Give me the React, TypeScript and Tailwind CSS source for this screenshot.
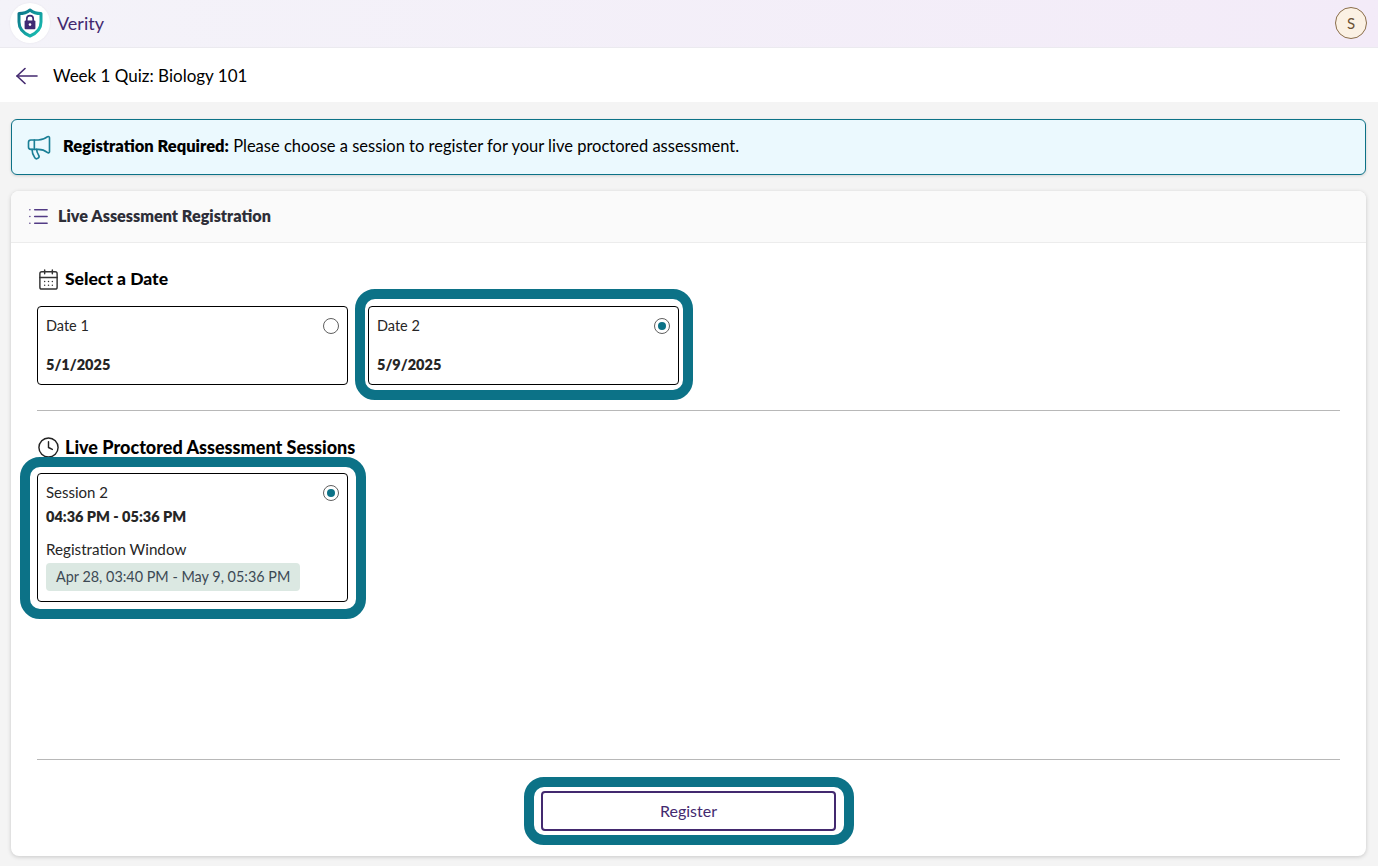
import { CalendarDays, Clock, List, Megaphone } from 'lucide-react'

// teal highlight drawn around the selected items, the gaps are not even in the picture
const ringBase = 'pointer-events-none absolute rounded-[20px] border-[10px] border-[#0c7287]'

function ShieldLogo() {
  return (
    <svg width="26" height="30" viewBox="0 0 26 30" fill="none">
      <defs>
        <linearGradient id="shield" x1="0" y1="0" x2="1" y2="1">
          <stop offset="0" stopColor="#0c7287" />
          <stop offset="1" stopColor="#19c3b5" />
        </linearGradient>
      </defs>
      <path
        d="M13 2 C16 4.5 20 5.6 24 5.6 V14 C24 21 19 25.5 13 28 C7 25.5 2 21 2 14 V5.6 C6 5.6 10 4.5 13 2 Z"
        stroke="url(#shield)"
        strokeWidth="3"
        strokeLinejoin="round"
      />
      <path d="M9.8 13 V10.8 A3.2 3.2 0 0 1 16.2 10.8 V13" stroke="#3f2a73" strokeWidth="1.7" />
      <rect x="7.6" y="12.6" width="10.8" height="8.6" rx="1" fill="#3f2a73" />
      <circle cx="13" cy="16.6" r="1.3" fill="#ffffff" />
    </svg>
  )
}

function BackArrow() {
  return (
    <svg width="22" height="18" viewBox="0 0 22 18" fill="none" stroke="#43296f" strokeWidth="1.6" strokeLinecap="round" strokeLinejoin="round">
      <path d="M1 9 H21" />
      <path d="M9 1.5 L1 9 L9 16.5" />
    </svg>
  )
}

function Radio({ checked }: { checked?: boolean }) {
  return (
    <span className="flex size-4 shrink-0 items-center justify-center rounded-full border border-[#5f5f5f] bg-white">
      {checked && <span className="size-2 rounded-full bg-[#0c7287]" />}
    </span>
  )
}

function DateCard({ label, date, checked }: { label: string; date: string; checked?: boolean }) {
  return (
    <div className="relative flex h-[79px] w-[311px] flex-col justify-between rounded-[4px] border border-black bg-white px-2 py-[10px]">
      <div className="flex items-center justify-between text-[14.5px] leading-[18px] text-[#262626]">
        <span>{label}</span>
        <Radio checked={checked} />
      </div>
      <div className="text-[14.5px] leading-[18px] font-extrabold text-[#262626]">{date}</div>
      {checked && <div className={`${ringBase} -top-[18px] -right-[15px] -bottom-[16px] -left-[14px]`} />}
    </div>
  )
}

function SectionTitle({ icon, size, children }: { icon: React.ReactNode; size: string; children: React.ReactNode }) {
  return (
    <h2 className={`flex h-5 items-center gap-[5px] font-black text-black ${size}`}>
      {icon}
      {children}
    </h2>
  )
}

export default function App() {
  return (
    <div className="flex h-[866px] flex-col overflow-hidden bg-[#f4f4f4] font-['Lato',sans-serif]">
      <header className="flex h-[48px] shrink-0 items-center justify-between border-b border-[#ebeaef] bg-gradient-to-r from-[#f4f3f9] to-[#f3ebf8] pr-[11px] pb-[1px] pl-[10px]">
        <div className="flex items-center gap-[7px]">
          <div className="flex size-10 items-center justify-center rounded-full bg-white shadow-[0_0_2px_#e4e2ea]">
            <ShieldLogo />
          </div>
          <span className="text-[18px] text-[#43296f]">Verity</span>
        </div>
        <div className="flex size-[32px] items-center justify-center rounded-full border border-[#8a6d4a] bg-[#fbf1e4] text-[15px] text-[#6b5134]">
          S
        </div>
      </header>

      <div className="flex h-[54px] shrink-0 items-center gap-[15px] bg-white pt-[2px] pl-[16px]">
        <BackArrow />
        <h1 className="text-[17px] text-black">Week 1 Quiz: Biology 101</h1>
      </div>

      <main className="flex flex-1 flex-col gap-4 px-[11px] pt-[17px] pr-[12px] pb-[10px]">
        <div className="flex h-[56px] shrink-0 items-center gap-[10px] rounded-md border border-[#0c7287] bg-[#ebf9fe] pb-[1px] pl-[13px] shadow-[0_1px_3px_rgba(0,0,0,0.15)]">
          <Megaphone className="size-[28px] text-[#1a7f96]" strokeWidth={1.4} />
          <p className="text-[16.5px] text-black">
            <b className="font-extrabold">Registration Required:</b> Please choose a session to register for your live
            proctored assessment.
          </p>
        </div>

        <section className="flex flex-1 flex-col rounded-lg bg-white shadow-[0_1px_4px_rgba(0,0,0,0.18)]">
          <div className="flex h-[52px] shrink-0 items-center gap-[8px] rounded-t-lg border-b border-[#ececec] bg-[#fafafa] pl-[16px]">
            <List className="size-[23px] text-[#523b85]" strokeWidth={1.5} />
            <span className="text-[16.2px] font-extrabold text-[#2e2e38]">Live Assessment Registration</span>
          </div>

          <div className="flex flex-1 flex-col px-[26px] pt-[26px]">
            <SectionTitle size="text-[17.5px]" icon={<CalendarDays className="size-[23px] text-[#333333]" strokeWidth={1.5} />}>
              Select a Date
            </SectionTitle>
            <div className="mt-[17px] flex gap-5">
              <DateCard label="Date 1" date="5/1/2025" />
              <DateCard label="Date 2" date="5/9/2025" checked />
            </div>
            <hr className="mt-[25px] border-[#b8b8b8]" />

            <div className="mt-[26px]">
              <SectionTitle size="text-[18px]" icon={<Clock className="size-[23px] text-[#222222]" strokeWidth={1.5} />}>
                Live Proctored Assessment Sessions
              </SectionTitle>
            </div>
            <div className="relative mt-[16px] h-[129px] w-[311px] rounded-[4px] border border-black bg-white px-2 pt-[11px]">
              <div className="flex items-center justify-between text-[15px] leading-[18px] text-[#262626]">
                <span className="-mt-[2px]">Session 2</span>
                <Radio checked />
              </div>
              <div className="mt-[7px] text-[14.5px] leading-[18px] font-extrabold text-[#262626]">
                04:36 PM - 05:36 PM
              </div>
              <div className="mt-[14px] text-[15.2px] leading-[18px] text-[#262626]">Registration Window</div>
              <div className="mt-[5px] inline-block h-[28px] rounded-[4px] bg-[#dbe8e2] px-[10px] text-[14.4px] leading-[28px] text-[#3d4a55]">
                Apr 28, 03:40 PM - May 9, 05:36 PM
              </div>
              <div className={`${ringBase} -top-[17px] -right-[19px] -bottom-[18px] -left-[18px]`} />
            </div>

            <hr className="mt-auto border-[#b8b8b8]" />
            <div className="flex justify-center pt-[31px] pb-[25px]">
              <button className="relative h-[40px] w-[295px] rounded-[4px] border-2 border-[#43296f] bg-white text-[16px] text-[#43296f]">
                Register
                <span className={`${ringBase} -top-[16px] -right-[20px] -bottom-[16px] -left-[19px]`} />
              </button>
            </div>
          </div>
        </section>
      </main>
    </div>
  )
}
